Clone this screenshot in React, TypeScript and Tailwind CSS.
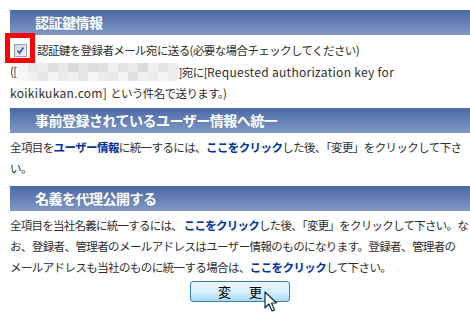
import React from "react";

const blurRow1 = ["#f3f3f3","#e9e9e9","#eeeeee","#dedede","#e8e8e8","#d9d9d9","#e5e5e5","#dcdcdc","#e1e1e1","#f1f1f1","#e3e3e3","#ebebeb","#dbdbdb","#f0f0f0","#e4e4e4","#ececec"];
const blurRow2 = ["#f7f7f7","#f0f0f0","#e7e7e7","#f4f4f4","#eaeaea","#f1f1f1","#e5e5e5","#f6f6f6","#ececec","#e8e8e8","#f3f3f3","#e2e2e2","#f0f0f0","#ebebeb","#f5f5f5","#eeeeee"];

function Header({ children }: { children: React.ReactNode }) {
  return (
    <div className="h-[25px] flex items-center pl-[25px] bg-gradient-to-b from-[#4a69a6] to-[#8198c4] text-white font-bold text-[14px] tracking-[-0.5px] whitespace-nowrap">
      {children}
    </div>
  );
}

function L({ children }: { children: React.ReactNode }) {
  return <span className="text-[#003399] font-bold">{children}</span>;
}

export default function App() {
  return (
    <div className="relative w-[470px] h-[325px] bg-white overflow-hidden pl-[10px] pt-[10px] font-['Noto_Sans_CJK_JP',sans-serif] text-[#2e2e2e] text-[11.5px] leading-[21px] tracking-[-0.6px]">
      <Header>認証鍵情報</Header>
      <div className="mt-[5px]">
        <div className="relative flex items-center h-[21px] whitespace-nowrap">
          <svg width="13" height="13" viewBox="0 0 13 13" className="ml-[4px] mr-[10px] shrink-0">
            <defs>
              <linearGradient id="cb" x1="0" y1="0" x2="1" y2="1">
                <stop offset="0" stopColor="#cfd2d6" />
                <stop offset="1" stopColor="#f6f6f6" />
              </linearGradient>
            </defs>
            <rect x="0.5" y="0.5" width="12" height="12" fill="url(#cb)" stroke="#9aa3ad" />
            <path d="M3.5 6.5 L5.5 9 L9.5 3.5" fill="none" stroke="#3658b8" strokeWidth="1.7" />
          </svg>
          <span>認証鍵を登録者メール宛に送る(必要な場合チェックしてください)</span>
          <div className="absolute left-[-5px] top-[-7px] w-[30px] h-[30px] border-[5px] border-[#ff0000]" />
        </div>
        <div className="flex items-center h-[21px] whitespace-nowrap">
          <span>([</span>
          <span className="inline-flex flex-col w-[160px] h-[18px] mx-[1px]">
            <span className="flex h-[9px]">
              {blurRow1.map((c, i) => (
                <span key={i} className="w-[10px] h-[9px]" style={{ backgroundColor: c }} />
              ))}
            </span>
            <span className="flex h-[9px]">
              {blurRow2.map((c, i) => (
                <span key={i} className="w-[10px] h-[9px]" style={{ backgroundColor: c }} />
              ))}
            </span>
          </span>
          <span>]宛に[<span className="text-[12px] tracking-[0.3px]">Requested authorization key for</span></span>
        </div>
        <div className="h-[21px] whitespace-nowrap">
          <span className="text-[12px] tracking-[0.3px]">koikikukan.com] </span>という件名で送ります。)
        </div>
      </div>

      <div className="mt-[5px]">
        <Header>事前登録されているユーザー情報へ統一</Header>
      </div>
      <div className="mt-[4px] whitespace-nowrap">
        <div>全項目を<L>ユーザー情報</L>に統一するには、<L>ここをクリック</L>した後、「変更」をクリックして下さ</div>
        <div>い。</div>
      </div>

      <div className="mt-[7px]">
        <Header>名義を代理公開する</Header>
      </div>
      <div className="mt-[4px] whitespace-nowrap">
        <div className="tracking-[-0.75px]">全項目を当社名義に統一するには、 <L>ここをクリック</L>した後、「変更」をクリックして下さい。な</div>
        <div>お、登録者、管理者のメールアドレスはユーザー情報のものになります。登録者、管理者の</div>
        <div>メールアドレスも当社のものに統一する場合は、<L>ここをクリック</L>して下さい。</div>
      </div>

      <div className="mt-[3px] flex pl-[180px]">
        <button className="w-[100px] h-[21px] rounded-[3px] border border-[#3c7fb1] bg-gradient-to-b from-[#eaf6fd] via-[#d9f0fc] to-[#a7d9f5] flex items-center justify-center gap-[18px] text-black text-[13px] tracking-normal leading-none">
          <span>変</span>
          <span>更</span>
        </button>
      </div>

      <svg className="absolute left-[264px] top-[291px]" width="14" height="22" viewBox="0 0 14 22">
        <path d="M1 1 L1 17 L5 13 L8 20 L10.5 19 L7.5 12 L12.5 12 Z" fill="#ffffff" stroke="#10323a" strokeWidth="1.2" strokeLinejoin="round" />
      </svg>
    </div>
  );
}
